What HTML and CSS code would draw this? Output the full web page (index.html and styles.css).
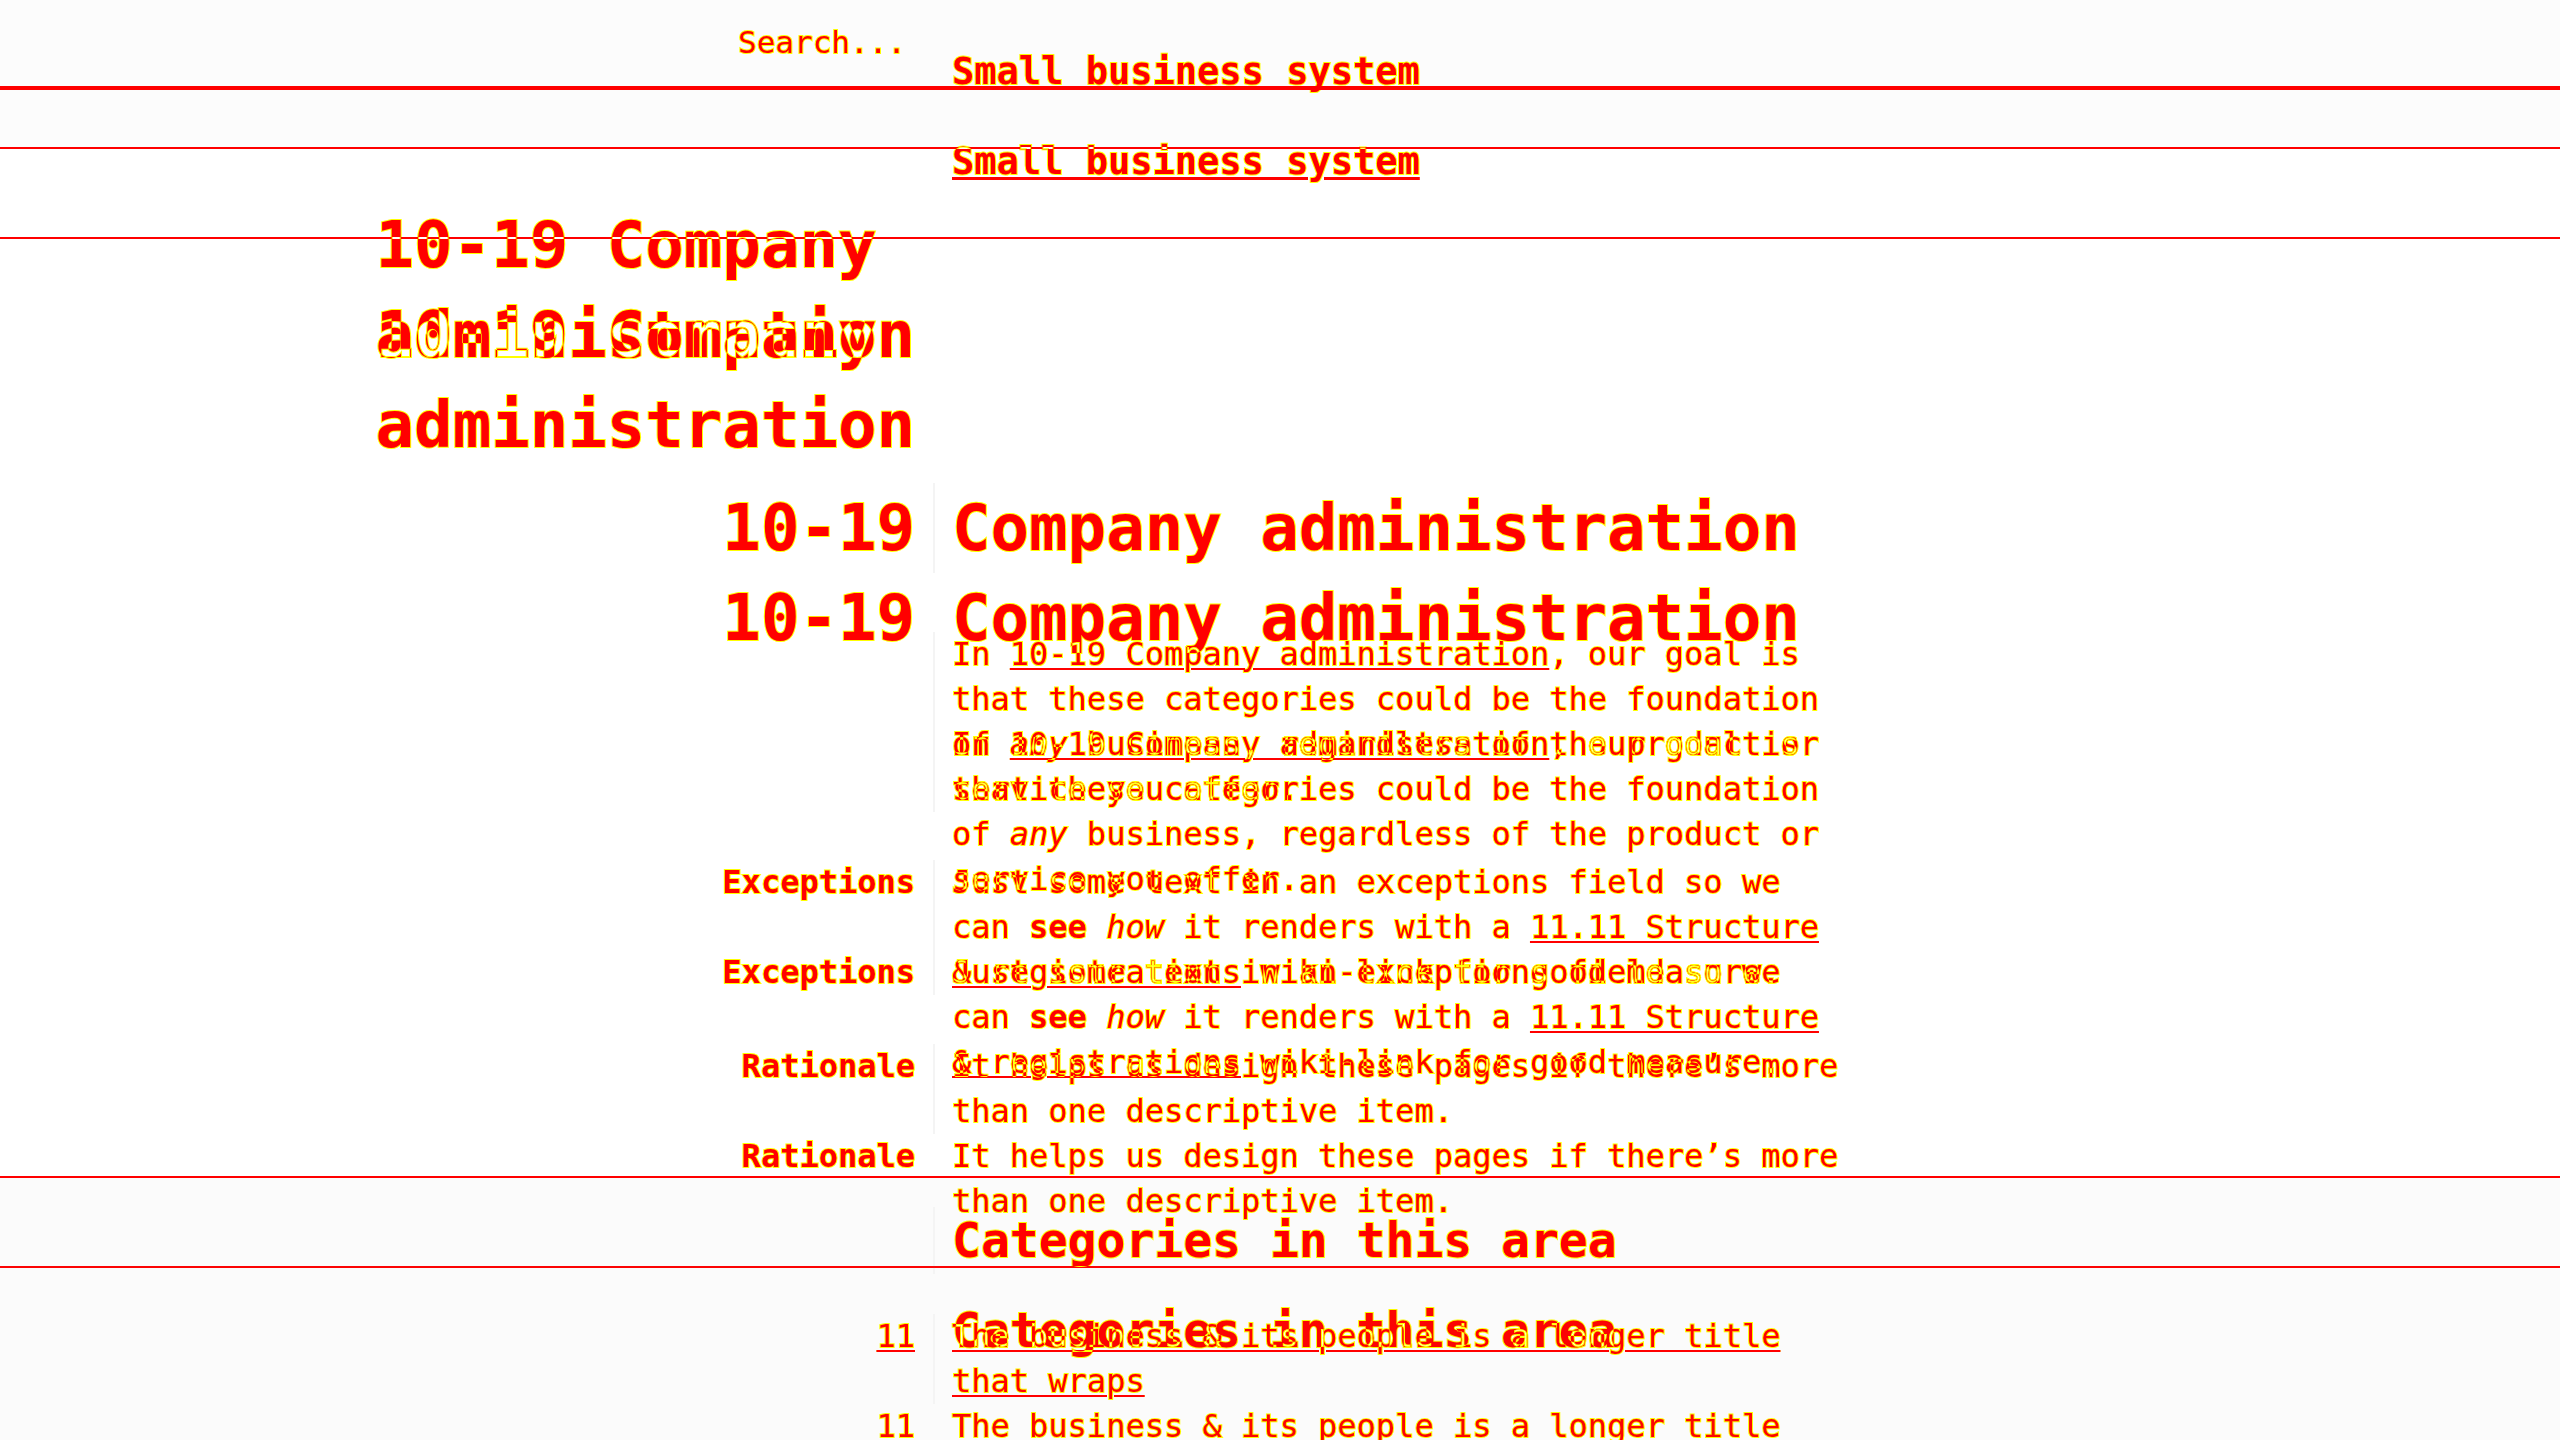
FILE: index.html
```html
<!DOCTYPE html>
<html lang="en">
<head>
<meta charset="utf-8">
<title>10-19 Company administration</title>
<link rel="stylesheet" href="styles.css">
</head>
<body>
<div class="page">
  <!-- base render -->
  <div class="layer layer-a">
    <header class="topbar">
      <div class="topbar-side"><span class="search">Search...</span></div>
      <div class="topbar-main"><a class="site-link">Small business system</a></div>
    </header>
    <div class="subbar"></div>
    <main class="content">
      <div class="row hero">
        <div class="side"><h1 class="side-title">10-19 Company administration</h1></div>
        <div class="main"></div>
      </div>
      <div class="row title-row">
        <div class="side"><span class="title-num">10-19</span></div>
        <div class="main"><h2 class="title">Company administration</h2></div>
      </div>
      <div class="row para-row">
        <div class="side"></div>
        <div class="main"><p class="text">In <a class="link">10-19 Company administration</a>, our goal is that these categories could be the foundation of <em>any</em> business, regardless of the product or service you offer.</p></div>
      </div>
      <div class="row field exceptions">
        <div class="side"><span class="label">Exceptions</span></div>
        <div class="main"><p class="text">Just some text in an exceptions field so we can <strong>see</strong> <em>how</em> it renders with a <a class="link">11.11 Structure &amp; registrations</a> wiki-link for good measure.</p></div>
      </div>
      <div class="row field rationale">
        <div class="side"><span class="label">Rationale</span></div>
        <div class="main"><p class="text">It helps us design these pages if there’s more than one descriptive item.</p></div>
      </div>
      <section class="cats">
        <div class="row cats-head">
          <div class="side"></div>
          <div class="main"><h3 class="cats-title">Categories in this area</h3></div>
        </div>
        <ul class="cat-list">
          <li class="row cat-item">
            <div class="side"><a class="link">11</a></div>
            <div class="main"><a class="link">The business &amp; its people is a longer title that wraps</a></div>
          </li>
        </ul>
      </section>
    </main>
  </div>

  <!-- offset render, cancels where it coincides with the base -->
  <div class="layer layer-b" aria-hidden="true">
    <header class="topbar">
      <div class="topbar-side"><span class="search">Search...</span></div>
      <div class="topbar-main"><a class="site-link">Small business system</a></div>
    </header>
    <div class="subbar"></div>
    <main class="content">
      <div class="row hero">
        <div class="side"><h1 class="side-title">10-19 Company administration</h1></div>
        <div class="main"></div>
      </div>
      <div class="row title-row">
        <div class="side"><span class="title-num">10-19</span></div>
        <div class="main"><h2 class="title">Company administration</h2></div>
      </div>
      <div class="row para-row">
        <div class="side"></div>
        <div class="main"><p class="text">In <a class="link">10-19 Company administration</a>, our goal is that these categories could be the foundation of <em>any</em> business, regardless of the product or service you offer.</p></div>
      </div>
      <div class="row field exceptions">
        <div class="side"><span class="label">Exceptions</span></div>
        <div class="main"><p class="text">Just some text in an exceptions field so we can <strong>see</strong> <em>how</em> it renders with a <a class="link">11.11 Structure &amp; registrations</a> wiki-link for good measure.</p></div>
      </div>
      <div class="row field rationale">
        <div class="side"><span class="label">Rationale</span></div>
        <div class="main"><p class="text">It helps us design these pages if there’s more than one descriptive item.</p></div>
      </div>
      <section class="cats">
        <div class="row cats-head">
          <div class="side"></div>
          <div class="main"><h3 class="cats-title">Categories in this area</h3></div>
        </div>
        <ul class="cat-list">
          <li class="row cat-item">
            <div class="side"><a class="link">11</a></div>
            <div class="main"><a class="link">The business &amp; its people is a longer title that wraps</a></div>
          </li>
        </ul>
      </section>
    </main>
  </div>

  <!-- anti-aliasing fringe of the base render -->
  <div class="layer ring ring-a" aria-hidden="true">
    <header class="topbar">
      <div class="topbar-side"><span class="search">Search...</span></div>
      <div class="topbar-main"><a class="site-link">Small business system</a></div>
    </header>
    <div class="subbar"></div>
    <main class="content">
      <div class="row hero">
        <div class="side"><h1 class="side-title">10-19 Company administration</h1></div>
        <div class="main"></div>
      </div>
      <div class="row title-row">
        <div class="side"><span class="title-num">10-19</span></div>
        <div class="main"><h2 class="title">Company administration</h2></div>
      </div>
      <div class="row para-row">
        <div class="side"></div>
        <div class="main"><p class="text">In <a class="link">10-19 Company administration</a>, our goal is that these categories could be the foundation of <em>any</em> business, regardless of the product or service you offer.</p></div>
      </div>
      <div class="row field exceptions">
        <div class="side"><span class="label">Exceptions</span></div>
        <div class="main"><p class="text">Just some text in an exceptions field so we can <strong>see</strong> <em>how</em> it renders with a <a class="link">11.11 Structure &amp; registrations</a> wiki-link for good measure.</p></div>
      </div>
      <div class="row field rationale">
        <div class="side"><span class="label">Rationale</span></div>
        <div class="main"><p class="text">It helps us design these pages if there’s more than one descriptive item.</p></div>
      </div>
      <section class="cats">
        <div class="row cats-head">
          <div class="side"></div>
          <div class="main"><h3 class="cats-title">Categories in this area</h3></div>
        </div>
        <ul class="cat-list">
          <li class="row cat-item">
            <div class="side"><a class="link">11</a></div>
            <div class="main"><a class="link">The business &amp; its people is a longer title that wraps</a></div>
          </li>
        </ul>
      </section>
    </main>
  </div>

  <!-- anti-aliasing fringe of the offset render -->
  <div class="layer ring ring-b" aria-hidden="true">
    <header class="topbar">
      <div class="topbar-side"><span class="search">Search...</span></div>
      <div class="topbar-main"><a class="site-link">Small business system</a></div>
    </header>
    <div class="subbar"></div>
    <main class="content">
      <div class="row hero">
        <div class="side"><h1 class="side-title">10-19 Company administration</h1></div>
        <div class="main"></div>
      </div>
      <div class="row title-row">
        <div class="side"><span class="title-num">10-19</span></div>
        <div class="main"><h2 class="title">Company administration</h2></div>
      </div>
      <div class="row para-row">
        <div class="side"></div>
        <div class="main"><p class="text">In <a class="link">10-19 Company administration</a>, our goal is that these categories could be the foundation of <em>any</em> business, regardless of the product or service you offer.</p></div>
      </div>
      <div class="row field exceptions">
        <div class="side"><span class="label">Exceptions</span></div>
        <div class="main"><p class="text">Just some text in an exceptions field so we can <strong>see</strong> <em>how</em> it renders with a <a class="link">11.11 Structure &amp; registrations</a> wiki-link for good measure.</p></div>
      </div>
      <div class="row field rationale">
        <div class="side"><span class="label">Rationale</span></div>
        <div class="main"><p class="text">It helps us design these pages if there’s more than one descriptive item.</p></div>
      </div>
      <section class="cats">
        <div class="row cats-head">
          <div class="side"></div>
          <div class="main"><h3 class="cats-title">Categories in this area</h3></div>
        </div>
        <ul class="cat-list">
          <li class="row cat-item">
            <div class="side"><a class="link">11</a></div>
            <div class="main"><a class="link">The business &amp; its people is a longer title that wraps</a></div>
          </li>
        </ul>
      </section>
    </main>
  </div>
</div>
</body>
</html>
```

FILE: styles.css
```css
* {
  box-sizing: border-box;
  margin: 0;
  padding: 0;
}

html, body {
  background: #ffffff;
}

body {
  font-family: "DejaVu Sans Mono", "Liberation Mono", monospace;
  width: 2560px;
  height: 1440px;
  overflow: hidden;
}

.page {
  position: relative;
  height: 1440px;
  overflow: hidden;
}

/* ---------- layers ---------- */
.layer-a {
  color: #ff0000;
}

/* offset copy: difference blend, reads red on white and cancels over red */
.layer-b {
  position: absolute;
  left: 0;
  right: 0;
  top: 90px;
  color: #00ffff;
  mix-blend-mode: difference;
}

/* yellow edge fringe, drawn with darken so it never tints red pixels */
.ring {
  position: absolute;
  left: 0;
  right: 0;
  color: transparent;
  -webkit-text-stroke: 2px #ffff00;
  mix-blend-mode: darken;
}

.ring-a {
  top: 0;
}

.ring-b {
  top: 90px;
}

a {
  color: inherit;
}

.link {
  text-decoration: underline;
  text-decoration-thickness: 2px;
  text-underline-offset: 3px;
}

/* ---------- top bar ---------- */
.topbar {
  height: 90px;
  display: grid;
  grid-template-columns: 933px 1fr;
  background: #fcfcfc;
  border-bottom: 4px solid #ff0000;
}

.topbar-side {
  text-align: right;
  padding-right: 27px;
  padding-top: 22px;
}

.search {
  font-size: 31px;
  line-height: 40px;
}

.topbar-main {
  padding-left: 19px;
  padding-top: 50px;
}

.site-link {
  font-size: 37px;
  line-height: 44px;
  font-weight: bold;
  text-decoration: none;
}

.layer-b .topbar,
.ring .topbar {
  background: transparent;
  border-bottom-color: transparent;
}

.layer-b .search,
.ring-b .search {
  visibility: hidden;
}

.layer-b .site-link {
  text-decoration: underline;
  text-decoration-thickness: 3px;
  text-underline-offset: 3px;
}

.subbar {
  height: 59px;
  background: #fcfcfc;
  border-bottom: 2px solid #ff0000;
}

.layer-b .subbar {
  background: transparent;
  border-bottom-color: #00ffff;
}

.ring .subbar {
  background: transparent;
  border-bottom-color: transparent;
}

/* ---------- content rows ---------- */
.row {
  display: grid;
  grid-template-columns: 933px 1fr;
}

.side {
  padding-right: 18px;
  text-align: right;
}

.main {
  padding-left: 17px;
  border-left: 2px solid transparent;
}

.layer-a .title-row .main,
.layer-a .para-row .main,
.layer-a .field .main,
.layer-a .cats .main {
  border-left-color: #f4f4f4;
}

.hero {
  margin-top: 51px;
}

.hero .side {
  display: flex;
  justify-content: flex-end;
}

.side-title {
  width: 14ch;
  text-align: left;
  font-size: 64px;
  line-height: 90px;
  font-weight: bold;
}

.title-row {
  margin-top: 103px;
}

.title-num,
.title {
  font-size: 64px;
  line-height: 90px;
  font-weight: bold;
}

.text {
  font-size: 32px;
  line-height: 45px;
  max-width: 46.5ch;
}

.para-row {
  margin-top: 58.5px;
}

.label {
  font-size: 32px;
  line-height: 45px;
  font-weight: bold;
}

.exceptions {
  margin-top: 48px;
}

.rationale {
  margin-top: 49px;
}

.text strong {
  font-weight: bold;
}

.text em {
  font-style: italic;
}

/* ---------- categories ---------- */
.cats {
  margin-top: 42.5px;
  border-top: 2px solid #ff0000;
}

.layer-a .cats {
  background: #fbfbfb;
  min-height: 264px;
}

.layer-b .cats {
  border-top-color: #00ffff;
}

.ring .cats {
  border-top-color: transparent;
}

.cats-head {
  padding-top: 29px;
}

.cats-title {
  font-size: 48px;
  line-height: 67px;
  font-weight: bold;
}

.cat-list {
  list-style: none;
  margin-top: 39.5px;
}

.cat-item {
  font-size: 32px;
  line-height: 45px;
}

.cat-item .main {
  max-width: calc(46.5ch + 19px);
}
```
